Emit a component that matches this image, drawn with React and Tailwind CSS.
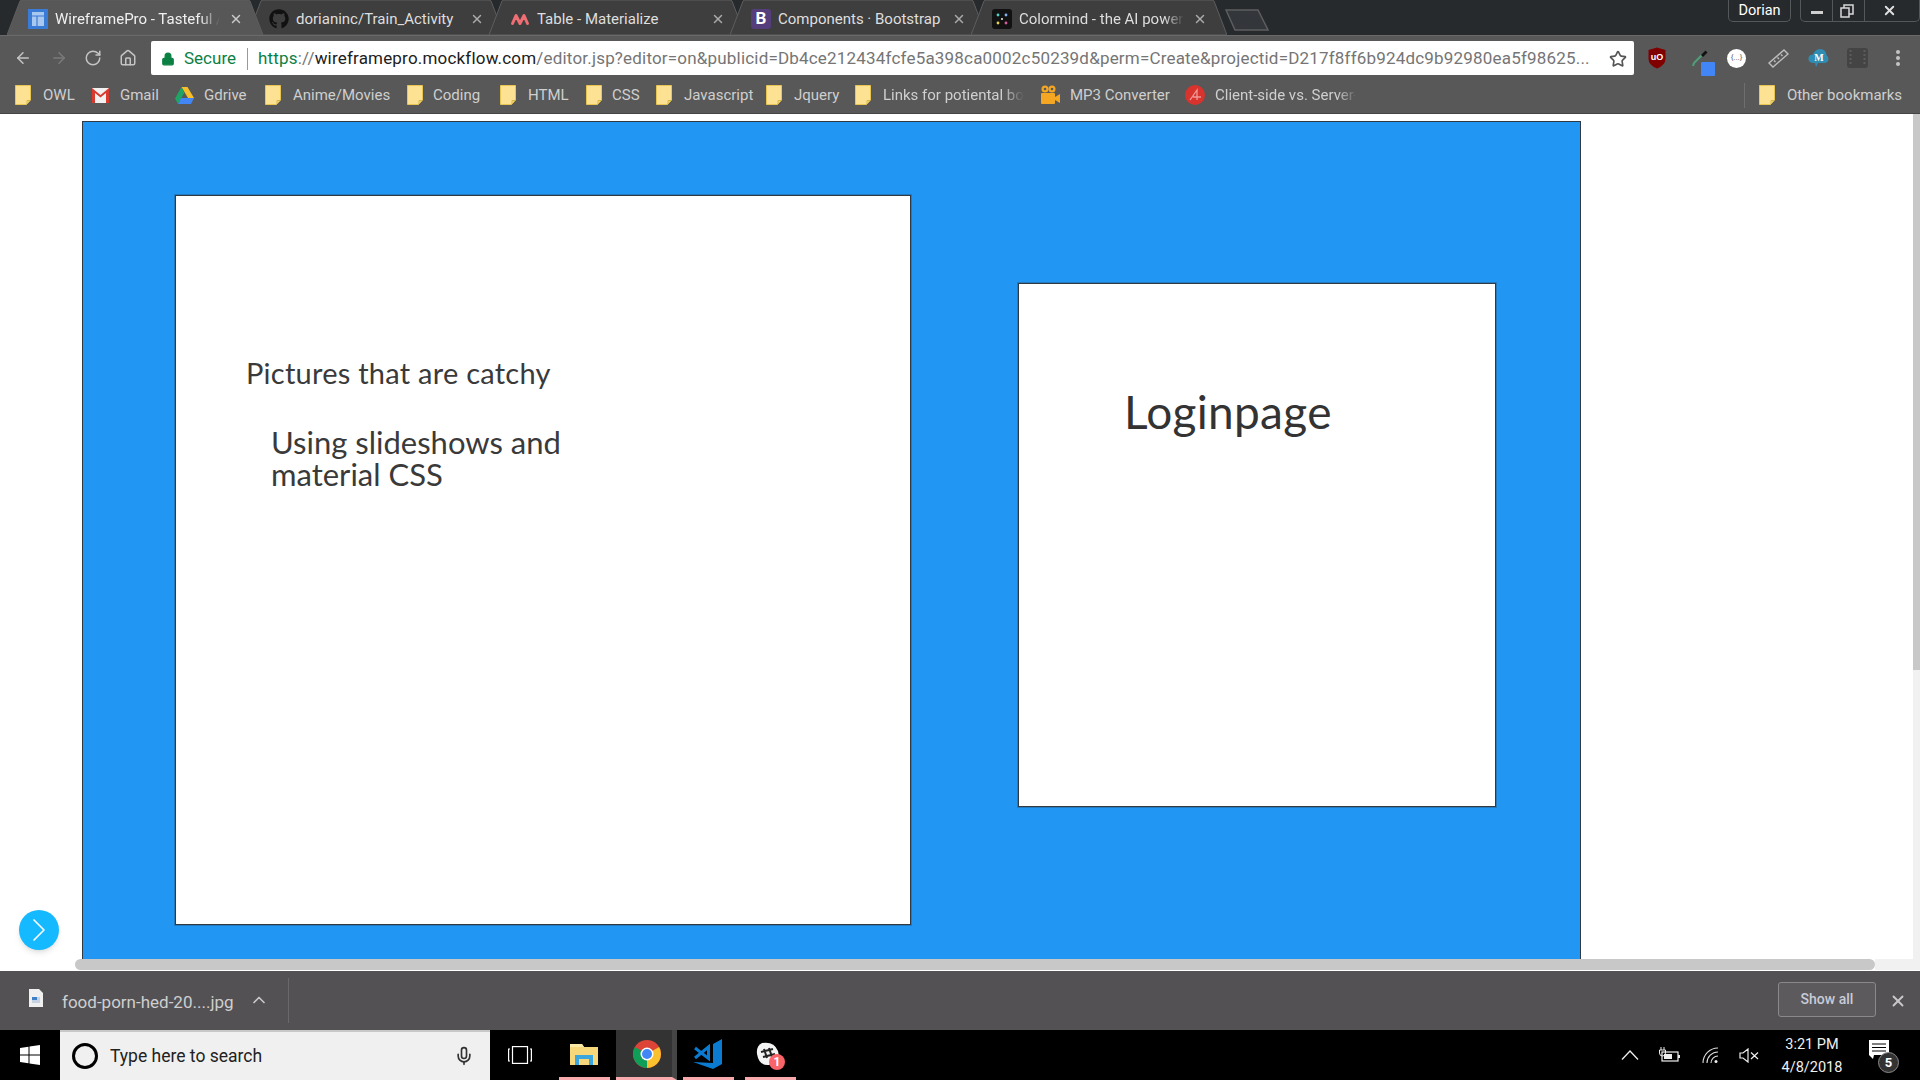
import { ArrowLeft, ArrowRight, RotateCw, Home, Lock, Star, X, ChevronUp, ChevronRight, Mic } from "lucide-react";
import { FaGithub } from "react-icons/fa";

const chrome = { fontFamily: "Roboto, 'Noto Sans', sans-serif" };

function TabShape({ active }) {
  return (
    <svg className="absolute left-0 top-0" width="256" height="35" viewBox="0 0 256 35">
      <path
        d="M0 35 L13 1 Q13.5 0 15 0 L241 0 Q242.500 0 243 1 L256 35 Z"
        fill={active ? "#575757" : "#3e3e3e"}
        stroke="#5e5e5e"
      />
    </svg>
  );
}

function WireframeIcon() {
  return (
    <svg width="20" height="20" viewBox="0 0 20 20">
      <rect width="20" height="20" fill="#3a7bd5" />
      <rect x="4" y="3" width="12" height="14" fill="#a9c8f0" />
      <path d="M4 7h12M9 7v10" stroke="#3a7bd5" strokeWidth="1.200" />
    </svg>
  );
}

function MaterializeIcon() {
  return (
    <svg width="20" height="20" viewBox="0 0 20 20" fill="none">
      <path d="M2.500 14.500 L6 6.500 L10 14.500 L14 6.500 L17.500 14.500" stroke="#ee6e73" strokeWidth="3" strokeLinecap="round" strokeLinejoin="round" />
    </svg>
  );
}

function BootstrapIcon() {
  return (
    <div className="flex h-5 w-5 items-center justify-center rounded-[3px] bg-[#563d7c] text-[17px] font-bold text-white">B</div>
  );
}

function ColormindIcon() {
  return (
    <svg width="20" height="20" viewBox="0 0 20 20">
      <rect width="20" height="20" rx="3" fill="#111" />
      <circle cx="6" cy="6" r="1.400" fill="#4dd0c8" />
      <circle cx="14" cy="6" r="1.400" fill="#7fb2ee" />
      <circle cx="6" cy="14" r="1.400" fill="#e6d34a" />
      <circle cx="14" cy="14" r="1.400" fill="#d85c9a" />
      <circle cx="10" cy="10" r="1" fill="#eee" />
    </svg>
  );
}

const tabs = [
  { title: "WireframePro - Tasteful /", icon: <WireframeIcon />, active: true, fade: true },
  { title: "dorianinc/Train_Activity", icon: <FaGithub size={20} color="#111" /> },
  { title: "Table - Materialize", icon: <MaterializeIcon /> },
  { title: "Components · Bootstrap", icon: <BootstrapIcon /> },
  { title: "Colormind - the AI power", icon: <ColormindIcon />, fade: true },
];

function TabStrip() {
  return (
    <div className="relative flex h-[35px] shrink-0 bg-[#272a2d] pl-[7px]">
      {tabs.map((t, i) => (
        <div key={i} className={`relative h-[35px] w-[256px] shrink-0 ${i > 0 ? "-ml-[15px]" : ""} ${t.active ? "z-10" : ""}`}>
          <TabShape active={t.active} />
          <div className="relative flex h-full items-center pl-[21px] pt-[3px]">
            <div className="flex w-[27px] shrink-0">{t.icon}</div>
            <div className={`w-[165px] overflow-hidden whitespace-nowrap text-[15px] ${t.active ? "text-[#f0f0f0]" : "text-[#dedede]"} ${t.fade ? "[mask-image:linear-gradient(to_right,black_88%,transparent)]" : ""}`}>
              {t.title}
            </div>
            <div className="flex w-[32px] justify-center">
              <X size={14} color={t.active ? "#c8c8c8" : "#aaaaaa"} strokeWidth={2.500} />
            </div>
          </div>
        </div>
      ))}
      <svg className="ml-[-2px] mt-[9px]" width="44" height="22" viewBox="0 0 44 22">
        <path d="M1 1 L33 1 L43 21 L10 21 Z" fill="#33363a" stroke="#5e5e5e" strokeWidth="1.500" />
      </svg>
      <div className="ml-auto flex h-[22px]">
        <div className="mr-[9px] flex w-[63px] items-center justify-center rounded-b-[5px] border border-t-0 border-[#55585b] pt-[1px] text-[14.500px] text-white">
          Dorian
        </div>
        <div className="flex w-[120px] rounded-b-[5px] border border-t-0 border-[#55585b]">
          <div className="flex w-[32px] items-center justify-center border-r border-[#55585b]">
            <div className="mt-[3px] h-[3px] w-[12px] bg-[#d0d0d0]" />
          </div>
          <div className="flex w-[32px] items-center justify-center border-r border-[#55585b] pr-[4px]">
            <svg width="14" height="14" viewBox="0 0 14 14" fill="none" stroke="#d8d8d8" strokeWidth="1.500">
              <rect x="1" y="4" width="8" height="9" />
              <path d="M4 4V1h9v9h-4" />
            </svg>
          </div>
          <div className="flex flex-1 items-center justify-center pr-[5px]">
            <X size={15} color="#e0e0e0" strokeWidth={3} />
          </div>
        </div>
      </div>
    </div>
  );
}

function Toolbar() {
  return (
    <div className="flex h-[40px] shrink-0 items-start border-t border-[#6a6a6a] bg-[#585858] pt-[5px]">
      <div className="flex h-[34px] w-[151px] shrink-0 items-center pl-[14px]">
        <div className="w-[36px]"><ArrowLeft size={18} color="#c4c4c4" /></div>
        <div className="w-[34px]"><ArrowRight size={18} color="#7a7a7a" /></div>
        <div className="w-[35px]"><RotateCw size={18} color="#c4c4c4" /></div>
        <Home size={18} color="#c4c4c4" />
      </div>
      <div className="flex h-[34px] w-[1483px] shrink-0 items-center rounded-[2px] bg-white pl-[10px] pt-[2px] text-[17px]">
        <Lock size={14} color="#0b8043" fill="#0b8043" className="shrink-0" />
        <span className="ml-[9px] w-[63px] shrink-0 text-[#0b8043]">Secure</span>
        <div className="h-[22px] w-px shrink-0 bg-[#9a9a9a]" />
        <div className="ml-[10px] w-[1343px] shrink-0 overflow-hidden whitespace-nowrap tracking-[0.19px] text-[#757575]">
          <span className="text-[#0b8043]">https</span>://<span className="text-[#202020]">wireframepro.mockflow.com</span>
          /editor.jsp?editor=on&amp;publicid=Db4ce212434fcfe5a398ca0002c50239d&amp;perm=Create&amp;projectid=D217f8ff6b924dc9b92980ea5f98625...
        </div>
        <Star size={18} color="#555555" strokeWidth={2.200} className="ml-auto mr-[7px] shrink-0" />
      </div>
      <div className="flex h-[34px] flex-1 items-center pl-[14px]">
        <div className="w-[44px]">
          <svg width="18" height="22" viewBox="0 0 18 22">
            <path d="M9 0.500 L17.500 3 V12 Q17.500 18 9 21.500 Q0.500 18 0.500 12 V3 Z" fill="#800000" />
            <text x="9" y="13" textAnchor="middle" fontSize="9" fontWeight="700" fill="#ffffff" fontFamily="Liberation Sans, sans-serif">uO</text>
          </svg>
        </div>
        <div className="relative h-[34px] w-[35px]">
          <svg className="absolute left-0 top-[9px]" width="16" height="17" viewBox="0 0 16 17" fill="none">
            <path d="M1 16 L2 13 L10 5" stroke="#4f9d78" strokeWidth="2.200" />
            <path d="M9 5 L13.500 0.500 L15.500 2.500 L11 7 Z" fill="#111111" />
          </svg>
          <div className="absolute left-[9px] top-[21px] h-[14px] w-[14px] rounded-[1px] bg-[#4285f4]" />
        </div>
        <div className="flex h-[19px] w-[19px] items-center justify-center rounded-full bg-white text-[8px] text-[#666666]">{"{...}"}</div>
        <div className="ml-[22px] w-[40px]">
          <svg width="21" height="19" viewBox="0 0 21 19" fill="none" stroke="#bdbdbd" strokeWidth="1.400">
            <path d="M1 14 L16 1 L20 5 L5 18 Z" />
            <path d="M6 11.500l1.500 1.500M9.500 8.500l1.500 1.500M13 5.500l1.500 1.500" />
          </svg>
        </div>
        <div className="w-[39px]">
          <svg width="21" height="20" viewBox="0 0 21 20">
            <path d="M5 15 Q0 14.500 0.500 10 Q1 6.500 5 6.500 Q7 1 13 1 Q18 2 18.500 7 Q21 9 20.500 12 Q19.500 15 16 15 H10 L8 19 L7 15 Z" fill="#2f8db3" />
            <text x="11" y="13" textAnchor="middle" fontSize="10" fontWeight="700" fill="#ffffff" fontFamily="Liberation Serif, serif">M</text>
          </svg>
        </div>
        <div className="w-[49px]">
          <svg width="21" height="20" viewBox="0 0 21 20">
            <rect width="21" height="20" rx="3" fill="#444444" />
            <path d="M3.500 2v16M17.500 2v16" stroke="#5c5c5c" strokeWidth="2" strokeDasharray="2 2" />
          </svg>
        </div>
        <div className="flex w-[4px] flex-col gap-[2px]">
          <div className="h-[4px] w-[4px] rounded-full bg-[#c4c4c4]" />
          <div className="h-[4px] w-[4px] rounded-full bg-[#c4c4c4]" />
          <div className="h-[4px] w-[4px] rounded-full bg-[#c4c4c4]" />
        </div>
      </div>
    </div>
  );
}

function Folder() {
  return (
    <svg className="shrink-0" width="16" height="20" viewBox="0 0 16 20">
      <path d="M0.500 0.500 H15.500 V15 L11.500 19.500 H0.500 Z" fill="#fde293" stroke="#e8c552" />
      <path d="M12 19 V15.500 H15" fill="none" stroke="#d8b440" />
    </svg>
  );
}

function GmailIcon() {
  return (
    <svg className="shrink-0" width="17" height="15" viewBox="0 0 17 15">
      <rect width="17" height="15" fill="#f1f1f1" />
      <path d="M0 0 L8.500 7 L17 0 V15 H14 V5 L8.500 9.500 L3 5 V15 H0 Z" fill="#d93a2f" />
    </svg>
  );
}

function DriveIcon() {
  return (
    <svg className="shrink-0" width="19" height="17" viewBox="0 0 19 17">
      <path d="M6.500 0 H12.500 L19 11 H13 Z" fill="#f7c02b" />
      <path d="M6.500 0 L9.500 5.500 L3 17 L0 11.500 Z" fill="#1fa463" />
      <path d="M6 11 H19 L16 17 H3 Z" fill="#4285f4" />
    </svg>
  );
}

function CamIcon() {
  return (
    <svg className="shrink-0" width="20" height="20" viewBox="0 0 20 20">
      <circle cx="5" cy="4" r="3.500" fill="#f5a623" />
      <circle cx="5" cy="4" r="1.300" fill="#585858" />
      <circle cx="12" cy="4" r="3.500" fill="#f5a623" />
      <circle cx="12" cy="4" r="1.300" fill="#585858" />
      <rect x="1" y="8" width="14" height="11" rx="1" fill="#f5a623" />
      <path d="M15 12 L20 9 V18 L15 15 Z" fill="#f5a623" />
    </svg>
  );
}

function RedIcon() {
  return (
    <svg className="shrink-0" width="20" height="20" viewBox="0 0 20 20">
      <circle cx="10" cy="10" r="10" fill="#d9332e" />
      <path d="M5 15 L12 5 V15 M8 12 H16" stroke="#f09a96" strokeWidth="1.300" fill="none" />
    </svg>
  );
}

const bookmarks = [
  { label: "OWL", icon: <Folder />, w: "w-[77px]", gap: "ml-[12px]" },
  { label: "Gmail", icon: <GmailIcon />, w: "w-[83px]", gap: "ml-[11px]" },
  { label: "Gdrive", icon: <DriveIcon />, w: "w-[90px]", gap: "ml-[10px]" },
  { label: "Anime/Movies", icon: <Folder />, w: "w-[142px]", gap: "ml-[12px]" },
  { label: "Coding", icon: <Folder />, w: "w-[93px]", gap: "ml-[10px]" },
  { label: "HTML", icon: <Folder />, w: "w-[86px]", gap: "ml-[12px]" },
  { label: "CSS", icon: <Folder />, w: "w-[70px]", gap: "ml-[10px]" },
  { label: "Javascript", icon: <Folder />, w: "w-[110px]", gap: "ml-[12px]" },
  { label: "Jquery", icon: <Folder />, w: "w-[89px]", gap: "ml-[12px]" },
  { label: "Links for potiental bo", icon: <Folder />, w: "w-[185px]", gap: "ml-[12px]", fade: true },
  { label: "MP3 Converter", icon: <CamIcon />, w: "w-[145px]", gap: "ml-[10px]" },
  { label: "Client-side vs. Server-", icon: <RedIcon />, w: "w-[170px]", gap: "ml-[10px]", fade: true },
];

function BookmarkBar() {
  return (
    <div className="flex h-[39px] shrink-0 items-center border-b border-[#444444] bg-[#585858] pl-[15px] pt-[2px] text-[15px] text-[#cfcfcf]">
      {bookmarks.map((b) => (
        <div key={b.label} className={`flex ${b.w} shrink-0 items-center overflow-hidden whitespace-nowrap`}>
          {b.icon}
          <span className={`${b.gap} ${b.fade ? "[mask-image:linear-gradient(to_right,black_85%,transparent)]" : ""}`}>{b.label}</span>
        </div>
      ))}
      <div className="ml-auto flex items-center pr-[18px]">
        <div className="mr-[14px] h-[25px] w-px bg-[#6e6e6e]" />
        <Folder />
        <span className="ml-[12px]">Other bookmarks</span>
      </div>
    </div>
  );
}

function Canvas() {
  return (
    <div className="relative min-h-0 flex-1 overflow-hidden bg-white">
      <div className="ml-[82px] mt-[7px] flex h-[850px] w-[1499px] items-start border-x border-t border-[#2f3a44] bg-[#2196f3] pl-[92px]" style={{ fontFamily: "Lato, sans-serif" }}>
        <div className="mt-[73px] h-[730px] w-[736px] shrink-0 border border-[#2f3a44] bg-white pl-[70px] pt-[161px] text-[#3a3a3a] ring-1 ring-[#2f3a44]/30">
          <p className="text-[29px] leading-[32px] tracking-[0.25px]">Pictures that are catchy</p>
          <p className="ml-[25px] mt-[37px] w-[330px] text-[31px] leading-[32px]">Using slideshows and material CSS</p>
        </div>
        <div className="ml-[107px] mt-[161px] h-[524px] w-[478px] shrink-0 border border-[#2f3a44] bg-white pl-[105px] pt-[102px] text-[#333333] ring-1 ring-[#2f3a44]/30">
          <p className="text-[46px] leading-[52px] tracking-[0.3px]">Loginpage</p>
        </div>
      </div>
      <div className="absolute left-[19px] top-[796px] flex h-[40px] w-[40px] items-center justify-center rounded-full bg-[#14b9ff] shadow-md">
        <ChevronRight size={40} color="#ffffff" strokeWidth={1} />
      </div>
    </div>
  );
}

function Main() {
  return (
    <div className="flex min-h-0 flex-1">
      <div className="flex min-w-0 flex-1 flex-col">
        <Canvas />
        <div className="flex h-[11px] shrink-0 bg-white">
          <div className="w-[75px]" />
          <div className="w-[1800px] rounded-full bg-[#c8c8c8]" />
          <div className="flex-1 bg-[#f1f1f1]" />
        </div>
      </div>
      <div className="w-[7px] shrink-0 bg-[#f1f1f1]">
        <div className="h-[556px] bg-[#c8c8c8]" />
      </div>
    </div>
  );
}

function DownloadBar() {
  return (
    <div className="flex h-[60px] shrink-0 items-center border-t border-[#ffffff] bg-[#535154] text-[#d0d0d0]" style={chrome}>
      <div className="flex h-[45px] w-[289px] items-center border-r border-[#6a686b] pl-[29px]">
        <svg className="-mt-[6px]" width="14" height="18" viewBox="0 0 14 18">
          <path d="M0 0 H10 L14 4 V18 H0 Z" fill="#f0f0f0" />
          <rect x="3" y="8" width="8" height="6" fill="#c5d3e4" />
          <rect x="3" y="8" width="5" height="3" fill="#3f7fc5" />
        </svg>
        <span className="ml-[19px] mt-[4px] text-[17px] text-[#cfcfcf]">food-porn-hed-20....jpg</span>
        <ChevronUp size={20} color="#c8c8c8" className="ml-[15px] -mt-[1px]" />
      </div>
      <div className="ml-auto mr-[13px] flex items-center">
        <div className="-mt-[2px] flex h-[35px] w-[98px] items-center justify-center rounded-[3px] border border-[#8a888b] bg-[#5c5a5d] text-[14px] font-medium text-[#c9cbd6]">
          Show all
        </div>
        <X size={18} color="#c8c8c8" strokeWidth={2.500} className="ml-[13px]" />
      </div>
    </div>
  );
}

function Taskbar() {
  return (
    <div className="flex h-[50px] shrink-0 bg-black text-white" style={chrome}>
      <div className="flex w-[60px] items-center justify-center">
        <svg width="20" height="20" viewBox="0 0 20 20" fill="#ffffff">
          <path d="M0 3 L8.500 1.800 V9.500 H0 Z M9.500 1.600 L20 0 V9.500 H9.500 Z M0 10.500 H8.500 V18.200 L0 17 Z M9.500 10.500 H20 V20 L9.500 18.400 Z" />
        </svg>
      </div>
      <div className="flex w-[430px] items-center border-t-2 border-[#c8c8c8] bg-[#f0f0f0] pl-[12px] text-[#222222]">
        <div className="h-[26px] w-[26px] rounded-full border-[3px] border-black bg-[#f0f0f0]" />
        <span className="ml-[12px] text-[17.500px]">Type here to search</span>
        <Mic size={20} color="#333333" className="ml-auto mr-[16px]" />
      </div>
      <div className="flex w-[69px] items-center justify-center pr-[9px]">
        <svg width="24" height="18" viewBox="0 0 24 18" fill="none" stroke="#ffffff" strokeWidth="1.200">
          <rect x="4.500" y="0.600" width="15" height="16.800" />
          <path d="M2 3H0.600V15H2M22 3h1.400V15H22" />
        </svg>
      </div>
      <div className="flex w-[51px] items-center justify-center border-b-[3px] border-[#f7a9ab] pr-[2px]">
        <svg width="28" height="22" viewBox="0 0 28 22">
          <path d="M0 1 H12 L14 4 H28 V22 H0 Z" fill="#f6d77a" />
          <path d="M0 1 H12 L14 4 H0 Z" fill="#fbe9a8" />
          <path d="M5 12 H23 V22 H19 V16 H9 V22 H5 Z" fill="#3aa6dd" />
        </svg>
      </div>
      <div className="ml-[6px] flex w-[61px] items-center justify-center border-b-[3px] border-r-[5px] border-b-[#f7a9ab] border-r-[#454545] bg-[#333333] pl-[5px]">
        <svg width="28" height="28" viewBox="0 0 28 28">
          <circle cx="14" cy="14" r="14" fill="#db4437" />
          <path d="M14 14 L26.100 7 A14 14 0 0 1 14 28 Z" fill="#fbc02d" />
          <path d="M14 14 L14 28 A14 14 0 0 1 1.900 7 Z" fill="#0f9d58" />
          <circle cx="14" cy="14" r="6.500" fill="#ffffff" />
          <circle cx="14" cy="14" r="5" fill="#4285f4" />
        </svg>
      </div>
      <div className="ml-[6px] flex w-[51px] items-center justify-center border-b-[3px] border-[#f7a9ab] pr-[1px]">
        <svg width="30" height="30" viewBox="0 0 30 30" fill="none">
          <path d="M20 5 L29 0 V25 L20 30 L0 23 L20 24 Z" fill="#0a7bd0" />
          <path d="M2 9 L15.500 19.500 V8 L2 19" stroke="#0a7bd0" strokeWidth="3" />
        </svg>
      </div>
      <div className="relative ml-[11px] flex w-[51px] items-center justify-center border-b-[3px] border-[#f7a9ab] pr-[5px]">
        <svg width="24" height="24" viewBox="0 0 24 24">
          <path d="M6 1 Q18 -1 22 9 Q25 20 13 23 Q3 24 1 12 Q0 4 6 1 Z" fill="#f4f4f4" />
          <path d="M8 7 L11 16 M13 6 L16 15 M5 10 L17 7 M7 15 L19 12" stroke="#222222" strokeWidth="2" />
        </svg>
        <div className="absolute bottom-[7px] left-[24px] flex h-[16px] w-[16px] items-center justify-center rounded-full bg-[#f9636a] text-[12px] font-bold">1</div>
      </div>
      <div className="ml-auto flex items-center pr-[6px]">
        <svg width="18" height="10" viewBox="0 0 18 10" fill="none" stroke="#eeeeee" strokeWidth="1.300">
          <path d="M1 9.500 L9 1 L17 9.500" />
        </svg>
        <svg className="ml-[19px]" width="22" height="16" viewBox="0 0 22 16">
          <path d="M3 0v3M6 0v3M1.500 3h6v3a3 3 0 0 1-6 0z" stroke="#eeeeee" fill="none" />
          <rect x="4" y="5" width="16" height="9" fill="none" stroke="#eeeeee" strokeWidth="1.200" />
          <rect x="6" y="7" width="8" height="5" fill="#eeeeee" />
          <rect x="20" y="8" width="2" height="3" fill="#eeeeee" />
        </svg>
        <svg className="ml-[22px]" width="18" height="17" viewBox="0 0 18 17" fill="none" stroke="#dddddd" strokeWidth="1.100">
          <path d="M1 16 A15 15 0 0 1 16 1 M5 16 A11 11 0 0 1 16 5 M9 16 A7 7 0 0 1 16 9" />
          <circle cx="14" cy="14.500" r="1.500" fill="#eeeeee" stroke="none" />
        </svg>
        <svg className="ml-[19px]" width="20" height="15" viewBox="0 0 20 15" fill="none" stroke="#eeeeee" strokeWidth="1.200">
          <path d="M1 5H4L9 1V14L4 10H1Z M12 4.500 L19 11 M19 4.500 L12 11" />
        </svg>
        <div className="ml-[5px] w-[96px] pt-[1px] text-center text-[14.500px] leading-[23px] text-[#f0f0f0]">
          <div>3:21 PM</div>
          <div>4/8/2018</div>
        </div>
        <div className="relative ml-[9px] mr-[19px] h-[34px] w-[26px]">
          <svg className="absolute left-0 top-[2px]" width="20" height="20" viewBox="0 0 20 20">
            <path d="M0 0 H20 V15 H5 L4 19 L0 15 Z" fill="#ffffff" />
            <path d="M3 4H17M3 7.500H17M3 11H17" stroke="#000000" strokeWidth="1" />
          </svg>
          <div className="absolute left-[9px] top-[14px] flex h-[21px] w-[21px] items-center justify-center rounded-full border border-[#8a8a8a] bg-[#333333] text-[13px] font-bold">5</div>
        </div>
      </div>
    </div>
  );
}

export default function App() {
  return (
    <div className="flex h-screen w-full flex-col overflow-hidden bg-white" style={chrome}>
      <TabStrip />
      <Toolbar />
      <BookmarkBar />
      <Main />
      <DownloadBar />
      <Taskbar />
    </div>
  );
}
